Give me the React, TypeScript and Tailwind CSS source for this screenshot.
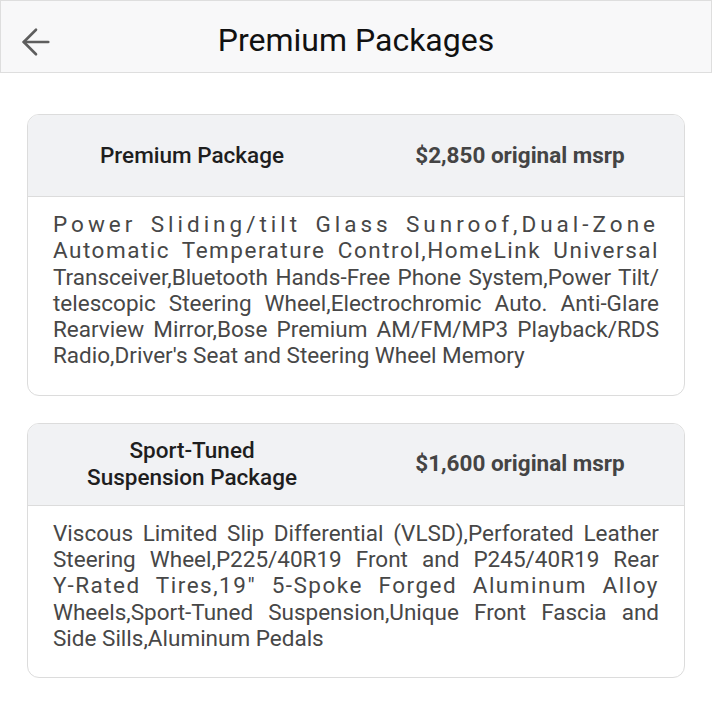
import { ArrowLeft } from 'lucide-react'

type Line = { t: string; tracking?: string }

type Pkg = {
    name: string[]
    price: string
    lines: Line[]
}

const packages: Pkg[] = [
    {
        name: ['Premium Package'],
        price: '$2,850 original msrp',
        lines: [
            { t: 'Power Sliding/tilt Glass Sunroof,Dual-Zone', tracking: 'tracking-[4px]' },
            { t: 'Automatic Temperature Control,HomeLink Universal', tracking: 'tracking-[1.5px]' },
            { t: 'Transceiver,Bluetooth Hands-Free Phone System,Power Tilt/' },
            { t: 'telescopic Steering Wheel,Electrochromic Auto. Anti-Glare' },
            { t: 'Rearview Mirror,Bose Premium AM/FM/MP3 Playback/RDS' },
            { t: "Radio,Driver's Seat and Steering Wheel Memory" },
        ],
    },
    {
        name: ['Sport-Tuned', 'Suspension Package'],
        price: '$1,600 original msrp',
        lines: [
            { t: 'Viscous Limited Slip Differential (VLSD),Perforated Leather' },
            { t: 'Steering Wheel,P225/40R19 Front and P245/40R19 Rear' },
            { t: 'Y-Rated Tires,19" 5-Spoke Forged Aluminum Alloy', tracking: 'tracking-[1.5px]' },
            { t: 'Wheels,Sport-Tuned Suspension,Unique Front Fascia and' },
            { t: 'Side Sills,Aluminum Pedals' },
        ],
    },
]

function PackageCard({ pkg }: { pkg: Pkg }) {
    return (
        <div className="rounded-xl border border-[#dcdcdc] bg-white overflow-hidden">
            <div className="h-[82px] flex items-center bg-[#f1f2f4] border-b border-[#dcdcdc]">
                <div className="flex-1 text-center text-[22.5px] leading-[27px] font-medium text-[#1e1e1e]">
                    {pkg.name.map(n => (
                        <div key={n}>{n}</div>
                    ))}
                </div>
                <div className="flex-1 text-center text-[22.5px] font-bold text-[#444]">{pkg.price}</div>
            </div>
            {/* justified lines, last one left */}
            <div className="px-[25px] pt-[14px] pb-[26px] text-[22.5px] leading-[26.3px] text-[#474747]">
                {pkg.lines.map((l, i) => (
                    <div
                        key={i}
                        className={`whitespace-nowrap ${i < pkg.lines.length - 1 ? 'text-justify [text-align-last:justify]' : ''} ${l.tracking ?? ''}`}
                    >
                        {l.t}
                    </div>
                ))}
            </div>
        </div>
    )
}

export default function App() {
    return (
        <div className="w-[712px] h-[720px] bg-white font-['Roboto',sans-serif]">
            <div className="h-[73px] bg-[#f8f8f9] border border-[#dedede] relative flex items-center justify-center">
                <ArrowLeft className="absolute left-[14px] top-[20px] text-[#5e5e5e]" size={42} strokeWidth={1.5} />
                <h1 className="text-[32px] text-[#111] pt-[6px]">Premium Packages</h1>
            </div>
            <div className="px-[27px] pt-[41px] space-y-[27px]">
                {packages.map(p => (
                    <PackageCard key={p.price} pkg={p} />
                ))}
            </div>
        </div>
    )
}
